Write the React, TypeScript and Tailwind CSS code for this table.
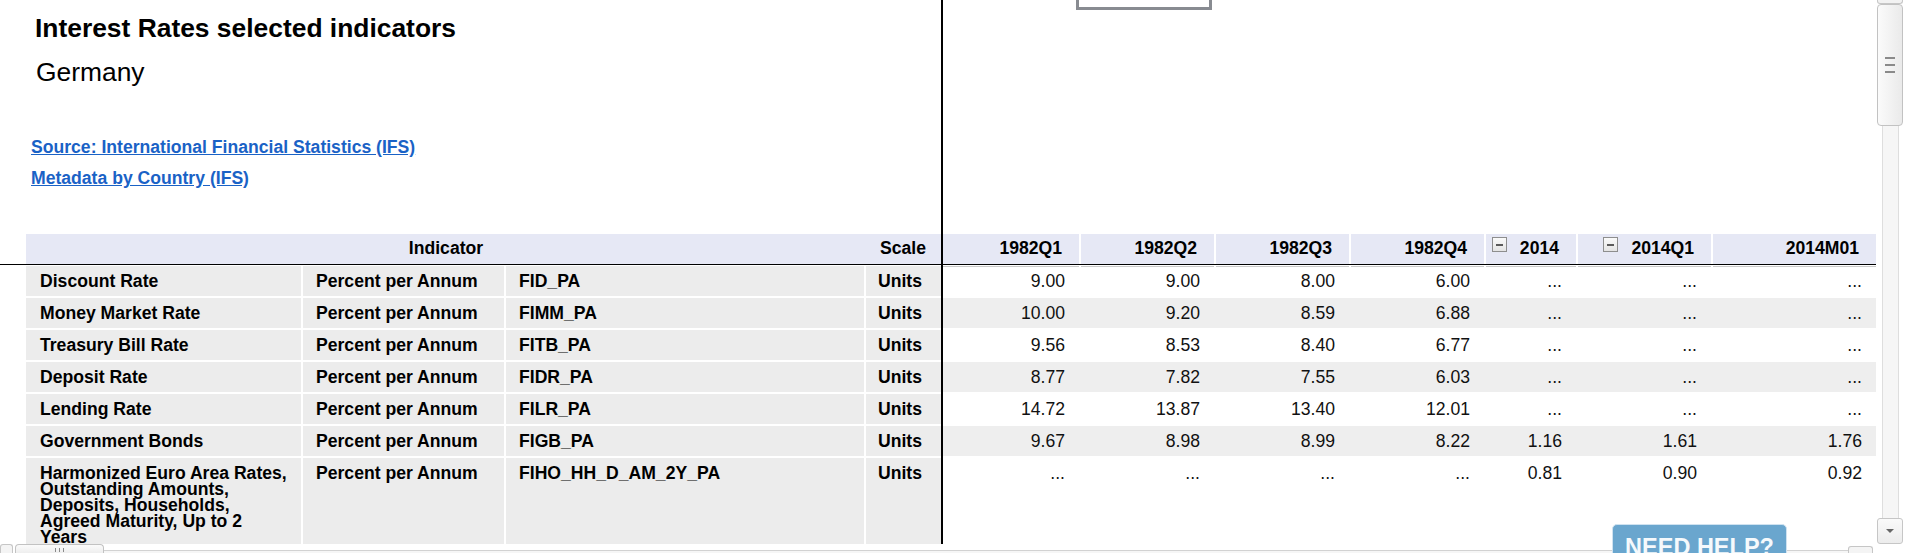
type Row = {
  name: string;
  unit: string;
  code: string;
  scale: string;
  values: string[];
};

type Col = {
  label: string;
  head: string;
  cell: string;
  toggle?: boolean;
};

const rows: Row[] = [
  { name: "Discount Rate", unit: "Percent per Annum", code: "FID_PA", scale: "Units", values: ["9.00", "9.00", "8.00", "6.00", "...", "...", "..."] },
  { name: "Money Market Rate", unit: "Percent per Annum", code: "FIMM_PA", scale: "Units", values: ["10.00", "9.20", "8.59", "6.88", "...", "...", "..."] },
  { name: "Treasury Bill Rate", unit: "Percent per Annum", code: "FITB_PA", scale: "Units", values: ["9.56", "8.53", "8.40", "6.77", "...", "...", "..."] },
  { name: "Deposit Rate", unit: "Percent per Annum", code: "FIDR_PA", scale: "Units", values: ["8.77", "7.82", "7.55", "6.03", "...", "...", "..."] },
  { name: "Lending Rate", unit: "Percent per Annum", code: "FILR_PA", scale: "Units", values: ["14.72", "13.87", "13.40", "12.01", "...", "...", "..."] },
  { name: "Government Bonds", unit: "Percent per Annum", code: "FIGB_PA", scale: "Units", values: ["9.67", "8.98", "8.99", "8.22", "1.16", "1.61", "1.76"] },
  {
    name: "Harmonized Euro Area Rates, Outstanding Amounts, Deposits, Households, Agreed Maturity, Up to 2 Years",
    unit: "Percent per Annum",
    code: "FIHO_HH_D_AM_2Y_PA",
    scale: "Units",
    values: ["...", "...", "...", "...", "0.81", "0.90", "0.92"],
  },
];

// header cells sit 2px apart, body cells run on without gaps
const cols: Col[] = [
  { label: "1982Q1", head: "w-[136px]", cell: "w-[136px]" },
  { label: "1982Q2", head: "w-[133px]", cell: "w-[135px]" },
  { label: "1982Q3", head: "w-[133px]", cell: "w-[135px]" },
  { label: "1982Q4", head: "w-[133px]", cell: "w-[135px]" },
  { label: "2014", head: "w-[90px]", cell: "w-[92px]", toggle: true },
  { label: "2014Q1", head: "w-[133px]", cell: "w-[135px]", toggle: true },
  { label: "2014M01", head: "w-[163px]", cell: "w-[165px]" },
];

function MinusBox() {
  return (
    <span className="mt-[-1px] flex h-[15px] w-[15px] items-center justify-center border border-[#8e8e8e] bg-gradient-to-b from-[#fafafa] to-[#e4e4e4]">
      <span className="h-[2px] w-[7px] bg-[#5a5a5a]" />
    </span>
  );
}

function LeftPane() {
  return (
    <div className="flex w-[941px] shrink-0 flex-col overflow-hidden">
      <div className="h-[234px] shrink-0">
        <h1 className="ml-[35px] pt-[13px] text-[26.4px] font-bold leading-[30px]">
          Interest Rates selected indicators
        </h1>
        <p className="ml-[36px] mt-[14px] text-[26.4px] leading-[30px]">Germany</p>
        <a href="#" className="ml-[31px] mt-[50px] block w-fit text-[17.6px] font-bold leading-[20px] text-[#1a62c6] underline">
          Source: International Financial Statistics (IFS)
        </a>
        <a href="#" className="ml-[31px] mt-[11px] block w-fit text-[17.6px] font-bold leading-[20px] text-[#1a62c6] underline">
          Metadata by Country (IFS)
        </a>
      </div>

      <div className="ml-[26px] flex h-[30px] shrink-0 bg-[#e6e8f5] text-[17.6px] font-bold leading-[20px]">
        <div className="w-[840px] pt-[4px] text-center">Indicator</div>
        <div className="flex-1 pr-[15px] pt-[4px] text-right">Scale</div>
      </div>
      <div className="h-px shrink-0 bg-black" />

      <div className="ml-[26px] mt-px flex flex-col gap-[2px] text-[17.6px] font-bold leading-[16px]">
        {rows.map((row) => (
          <div key={row.code} className="grid grid-cols-[275px_201px_358px_75px] gap-x-[2px]">
            <div className="bg-[#ececec] pb-[7px] pl-[14px] pr-[10px] pt-[7px]">{row.name}</div>
            <div className="bg-[#ececec] pb-[7px] pl-[13px] pt-[7px]">{row.unit}</div>
            <div className="bg-[#ececec] pb-[7px] pl-[13px] pt-[7px]">{row.code}</div>
            <div className="bg-[#ececec] pb-[7px] pr-[19px] pt-[7px] text-right">{row.scale}</div>
          </div>
        ))}
      </div>
    </div>
  );
}

function RightPane() {
  return (
    <div className="flex w-[933px] shrink-0 flex-col overflow-hidden">
      <div className="h-[234px] shrink-0">
        <div className="ml-[133px] h-[10px] w-[136px] border-[3px] border-t-0 border-[#888b91]" />
      </div>

      <div className="flex h-[30px] shrink-0 gap-[2px] text-[17.6px] font-bold leading-[20px]">
        {cols.map((col) => (
          <div key={col.label} className={`${col.head} flex items-start justify-end gap-[13px] bg-[#e6e8f5] pr-[17px] pt-[4px]`}>
            {col.toggle && <MinusBox />}
            <span>{col.label}</span>
          </div>
        ))}
      </div>
      <div className="h-px shrink-0 bg-black" />
      <div className="mt-px flex h-px shrink-0 gap-[2px]">
        {cols.map((col) => (
          <div key={col.label} className={`${col.head} bg-[#c9c9c9]`} />
        ))}
      </div>

      <div className="flex flex-col gap-[2px] text-[17.6px] leading-[16px] text-[#111]">
        {rows.map((row, i) => (
          <div key={row.code} className={`flex ${i % 2 === 1 ? "bg-[#eeeeee]" : "bg-white"}`}>
            {row.values.map((v, j) => (
              <div
                key={cols[j].label}
                className={`${cols[j].cell} pb-[7px] pr-[14px] text-right ${i === 0 ? "pt-[6px]" : "pt-[7px]"}`}
              >
                {v}
              </div>
            ))}
          </div>
        ))}
      </div>
    </div>
  );
}

function VScrollbar() {
  return (
    <div className="flex w-[31px] shrink-0 flex-col">
      <div className="ml-px h-[4px] w-[26px] rounded-b-[3px] border border-t-0 border-[#c6c6c6] bg-[#f2f2f2]" />
      <div className="ml-px flex h-[122px] w-[26px] flex-col items-center justify-center gap-[5px] rounded-[4px] border border-[#c2c2c2] bg-gradient-to-r from-[#fbfbfb] to-[#eaeaea]">
        <div className="h-[2px] w-[10px] bg-[#8a8a8a]" />
        <div className="h-[2px] w-[10px] bg-[#8a8a8a]" />
        <div className="h-[2px] w-[10px] bg-[#8a8a8a]" />
      </div>
      <div className="ml-[6px] w-[17px] flex-1 border-x border-[#dedede] bg-[#f6f6f6]" />
      <div className="ml-px flex h-[26px] w-[26px] items-center justify-center rounded-[3px] border border-[#c6c6c6] bg-gradient-to-b from-[#fafafa] to-[#ececec]">
        <div className="h-0 w-0 border-x-[4px] border-t-[4px] border-x-transparent border-t-[#666]" />
      </div>
    </div>
  );
}

function HScrollbar() {
  return (
    <div className="flex h-[9px] items-end">
      <div className="h-[9px] w-[13px] rounded-t-[3px] border border-b-0 border-[#c6c6c6] bg-[#f4f4f4]" />
      <div className="ml-[2px] flex h-[9px] w-[89px] items-end justify-center gap-[3px] rounded-t-[4px] border border-b-0 border-[#c2c2c2] bg-gradient-to-b from-[#fbfbfb] to-[#eeeeee] pb-[1px]">
        <div className="h-[4px] w-px bg-[#8a8a8a]" />
        <div className="h-[4px] w-px bg-[#8a8a8a]" />
        <div className="h-[4px] w-px bg-[#8a8a8a]" />
      </div>
      <div className="h-[3px] flex-1 border-t border-[#d2d2d2] bg-[#f6f6f6]" />
      <div className="h-[7px] w-[25px] rounded-t-[3px] border border-b-0 border-[#c6c6c6] bg-[#f4f4f4]" />
      <div className="w-[34px]" />
    </div>
  );
}

export default function App() {
  return (
    <div className="relative h-[553px] w-[1907px] overflow-hidden bg-white font-['Liberation_Sans',Arial,sans-serif] text-black">
      <div className="flex h-[544px]">
        <LeftPane />
        <div className="w-[2px] shrink-0 bg-black" />
        <RightPane />
        <VScrollbar />
      </div>
      <HScrollbar />

      <button className="absolute left-[1612px] top-[524px] h-[40px] w-[175px] rounded-[5px] border border-[#cfe2f0] bg-[#6aa6ce] pt-[6px] text-center align-top font-['Liberation_Sans',Arial,sans-serif] text-[23.5px] font-bold leading-[26px] text-[#f5f9fc]">
        <span className="block">NEED HELP?</span>
      </button>
    </div>
  );
}
